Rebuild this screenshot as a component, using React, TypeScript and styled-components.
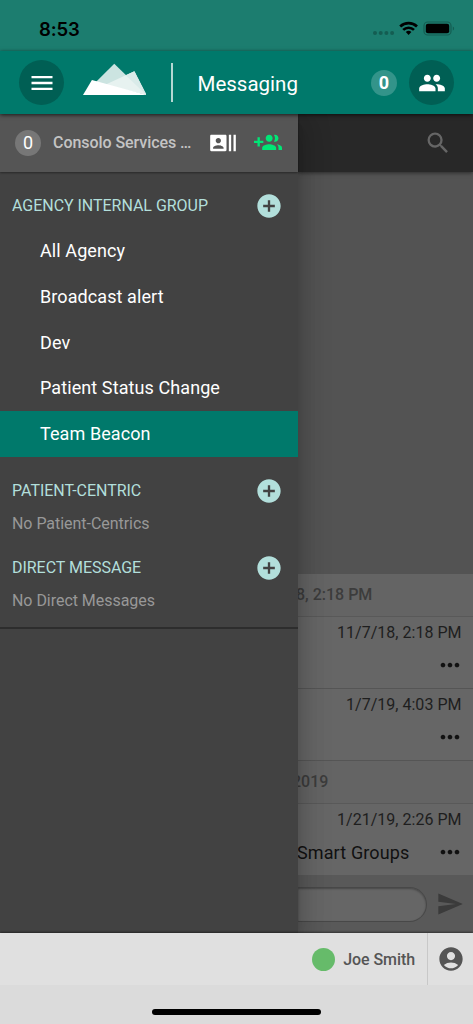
import React from 'react';
import styled, { createGlobalStyle, css } from 'styled-components';
import {
  MdMenu, MdPeople, MdRecentActors, MdSearch, MdAddCircle, MdMoreHoriz, MdSend, MdAccountCircle,
} from 'react-icons/md';

const GlobalStyle = createGlobalStyle`
  * { box-sizing: border-box; }
  body { margin: 0; font-family: Roboto, "Liberation Sans", sans-serif; }
  svg { display: block; flex: none; }
`;

const Screen = styled.div`
  width: 473px;
  height: 1024px;
  display: flex;
  flex-direction: column;
  overflow: hidden;
  background: #535353;
`;

const StatusBar = styled.div`
  height: 51px;
  flex: none;
  display: flex;
  align-items: center;
  justify-content: space-between;
  padding: 6px 18px 0 39px;
  background: #1c7d6f;
  position: relative;
  z-index: 3;
`;

const Clock = styled.span`
  font: 600 18.5px/22px Inter, Roboto, sans-serif;
  letter-spacing: -0.1px;
  color: #000;
`;

const Header = styled.header`
  height: 63px;
  flex: none;
  display: flex;
  align-items: center;
  padding: 0 19px;
  background: #00796b;
  position: relative;
  z-index: 3;
  box-shadow: 0 1px 4px rgba(0, 0, 0, 0.7);
`;

const RoundButton = styled.button`
  width: 45px;
  height: 45px;
  flex: none;
  display: flex;
  align-items: center;
  justify-content: center;
  padding: 0;
  border: 0;
  border-radius: 50%;
  background: #005f54;
  color: #fff;
`;

const Logo = styled.svg`
  margin: 0 25px 6px 18.5px;
`;

const Divider = styled.i`
  width: 1.5px;
  height: 39px;
  margin-right: 25px;
  background: #b5d8d3;
`;

const Title = styled.h1`
  flex: 1;
  margin: 2px 0 0;
  font-size: 20.5px;
  line-height: 24px;
  font-weight: 400;
  letter-spacing: 0;
  color: #fff;
`;

const Count = styled.span<{ $tone: string; $bold?: boolean }>`
  width: 26px;
  height: 26px;
  flex: none;
  border-radius: 50%;
  background: ${(p) => p.$tone};
  color: #fff;
  text-align: center;
  font-size: 18px;
  line-height: 26px;
  font-weight: ${(p) => (p.$bold ? 700 : 400)};
`;

const PeopleButton = styled(RoundButton)`
  margin-left: 12px;
`;

const Main = styled.main`
  flex: 1;
  min-height: 0;
  display: flex;
`;

const Drawer = styled.aside`
  width: 298px;
  flex: none;
  background: #424242;
  position: relative;
  z-index: 2;
  box-shadow: 0 8px 10px -5px rgba(0, 0, 0, 0.2), 0 16px 24px 2px rgba(0, 0, 0, 0.14),
    0 6px 30px 5px rgba(0, 0, 0, 0.12);
`;

const DrawerTop = styled.div`
  height: 57.5px;
  display: flex;
  align-items: center;
  padding: 0 15px;
  background: #555;
  box-shadow: 0 1px 2px rgba(0, 0, 0, 0.4);
`;

const Organization = styled.span`
  width: 156px;
  margin-left: 12px;
  font-size: 16px;
  line-height: 20px;
  font-weight: 500;
  letter-spacing: -0.06px;
  color: #c4c4c4;
  white-space: nowrap;
`;

const DrawerIcons = styled.div`
  display: flex;
  gap: 17px;
  color: #fff;
`;

const Groups = styled.nav`
  border-bottom: 2px solid #2d2d2d;
  height: 457.5px;
  padding-top: 20px;
`;

const SectionHead = styled.div<{ $first?: boolean }>`
  display: flex;
  align-items: center;
  justify-content: space-between;
  height: 28px;
  margin-top: ${(p) => (p.$first ? '0' : '20px')};
  margin-bottom: ${(p) => (p.$first ? '9px' : '0')};
  padding: 0 15px 0 12px;
  font-size: 16px;
  line-height: 20px;
  letter-spacing: -0.03px;
  color: #b2dfdb;
`;

const Item = styled.a<{ $active?: boolean }>`
  display: flex;
  align-items: center;
  height: 45.7px;
  padding: 0 0 1px 40px;
  font-size: 18px;
  letter-spacing: 0.09px;
  color: #fff;
  ${(p) => p.$active && css`background: #00796b;`}
`;

const Channels = styled.div`
  margin-bottom: 20.5px;
`;

const Empty = styled.p`
  margin: 9px 0 0 12px;
  font-size: 16px;
  line-height: 20px;
  letter-spacing: -0.04px;
  color: #989898;
`;

const Chat = styled.section`
  flex: 1;
  min-width: 0;
  display: flex;
  flex-direction: column;
  overflow: hidden;
  background: #535353;
`;

const ChatBar = styled.div`
  height: 57.5px;
  flex: none;
  display: flex;
  align-items: center;
  justify-content: flex-end;
  padding-right: 21px;
  background: #282828;
  color: #666;
  box-shadow: 0 1px 4px rgba(0, 0, 0, 0.5);
`;

const Messages = styled.div`
  margin-top: auto;
`;

const DateRow = styled.div<{ $height: number; $shift: number }>`
  height: ${(p) => p.$height}px;
  display: flex;
  align-items: center;
  border-bottom: 1px solid #595959;
  background: #646464;
  color: #3c3c3c;
  font-size: 16px;
  font-weight: 500;
  white-space: nowrap;
  text-indent: ${(p) => p.$shift}px;
`;

const Message = styled.article`
  height: 72px;
  padding: 6px 11.5px 0 0;
  border-bottom: 1px solid #555;
  background: #666;
  color: #1e1e1e;
  &:last-child { border-bottom: 0; height: 71.5px; }
`;

const Stamp = styled.time`
  display: block;
  text-align: right;
  font-size: 16px;
  line-height: 20px;
  letter-spacing: 0.02px;
`;

const MessageBody = styled.div`
  display: flex;
  align-items: center;
  justify-content: space-between;
  height: 28px;
  margin-top: 8.5px;
  margin-right: -2px;
  margin-left: -1px;
  font-size: 18px;
  letter-spacing: 0.12px;
  color: #111;
`;

const Composer = styled.div`
  height: 58px;
  flex: none;
  display: flex;
  align-items: center;
  gap: 9px;
  padding-right: 9.5px;
  background: #595959;
  color: #3b3b3b;
`;

const Input = styled.div`
  flex: 1;
  height: 35px;
  border: 1px solid #484848;
  border-left: 0;
  border-radius: 0 18px 18px 0;
  background: #666;
  box-shadow: inset 0 1px 2px rgba(0, 0, 0, 0.3);
`;

const Footer = styled.footer`
  height: 52px;
  flex: none;
  display: flex;
  align-items: center;
  justify-content: flex-end;
  background: #e0e0e0;
  color: #555;
  position: relative;
  z-index: 3;
  box-shadow: 0 -1px 2px rgba(0, 0, 0, 0.45);
`;

const Presence = styled.i`
  width: 23px;
  height: 23px;
  border-radius: 50%;
  background: #66bb6a;
`;

const UserName = styled.span`
  margin: 0 12px 0 8px;
  font-size: 16px;
  font-weight: 500;
  letter-spacing: -0.08px;
`;

const Account = styled.div`
  width: 46px;
  height: 52px;
  display: flex;
  align-items: center;
  justify-content: center;
  border-left: 1px solid #c8c8c8;
`;

const HomeArea = styled.div`
  height: 39px;
  flex: none;
  display: flex;
  justify-content: center;
  padding-top: 23.5px;
  background: #dbdbdb;
  position: relative;
  z-index: 3;
`;

const HomeBar = styled.i`
  width: 169px;
  height: 6px;
  border-radius: 3px;
  background: #000;
`;

const AddGroupIcon = () => (
  <svg width="28" height="28" viewBox="0 0 24 24" fill="#00e676">
    <path d="M8 10H5V7H3v3H0v2h3v3h2v-3h3v-2zm10 1c1.66 0 2.99-1.34 2.99-3S19.66 5 18 5c-.32 0-.63.05-.91.14.57.81.9 1.79.9 2.86s-.34 2.04-.9 2.86c.28.09.59.14.91.14zm-5 0c1.66 0 2.99-1.34 2.99-3S14.66 5 13 5c-1.66 0-3 1.34-3 3s1.34 3 3 3zm6.62 2.16c.83.73 1.38 1.66 1.38 2.84v2h3v-2c0-1.54-2.37-2.49-4.38-2.84zM13 13c-2 0-6 1-6 3v2h12v-2c0-2-4-3-6-3z" />
  </svg>
);

const StatusIcons = () => (
  <svg width="83" height="18" viewBox="0 0 83 18">
    <g fill="#145d52">
      <circle cx="3" cy="13" r="2" /><circle cx="8.7" cy="13" r="2" />
      <circle cx="14.4" cy="13" r="2" /><circle cx="20.1" cy="13" r="2" />
    </g>
    <g fill="none" stroke="#000" strokeWidth="2.7">
      <path d="M28.2 6.5a12.2 12.2 0 0 1 16.8 0" />
      <path d="M31.2 9.9a7.8 7.8 0 0 1 10.8 0" />
    </g>
    <path d="M33.8 12a4 4 0 0 1 5.6 0L36.6 15z" />
    <rect x="52" y="2" width="27" height="13" rx="3.8" fill="none" stroke="#145d52" strokeWidth="1.2" />
    <rect x="53.8" y="3.7" width="23.4" height="9.6" rx="2.1" />
    <path d="M80.8 6.4c1.8.7 1.8 3.5 0 4.2z" fill="#145d52" />
  </svg>
);

const Mountain = () => (
  <Logo width="63.5" height="33" viewBox="0 0 64 33">
    <path d="M12 20L31.5 0.5L64 32Z" fill="#cce4e1" />
    <path d="M23 21.5L51.8 8.3L64 32Z" fill="#e7f2f0" />
    <path d="M43 12.2L51.8 8.3L64 32Z" fill="#d9ebe9" />
    <path d="M0 32L9 17L64 32Z" fill="#fff" />
  </Logo>
);

const channels = ['All Agency', 'Broadcast alert', 'Dev', 'Patient Status Change', 'Team Beacon'];

const Section = ({ title, first }: { title: string; first?: boolean }) => (
  <SectionHead $first={first}>{title}<MdAddCircle size={28} /></SectionHead>
);

const Entry = ({ time, text }: { time: string; text?: string }) => (
  <Message>
    <Stamp>{time}</Stamp>
    <MessageBody><span>{text}</span><MdMoreHoriz size={28} /></MessageBody>
  </Message>
);

export default function App() {
  return (
    <>
      <GlobalStyle />
      <Screen>
        <StatusBar><Clock>8:53</Clock><StatusIcons /></StatusBar>
        <Header>
          <RoundButton><MdMenu size={28} /></RoundButton>
          <Mountain />
          <Divider />
          <Title>Messaging</Title>
          <Count $tone="#33948a" $bold>0</Count>
          <PeopleButton><MdPeople size={28} /></PeopleButton>
        </Header>
        <Main>
          <Drawer>
            <DrawerTop>
              <Count $tone="#777">0</Count>
              <Organization>Consolo Services …</Organization>
              <DrawerIcons><MdRecentActors size={28} /><AddGroupIcon /></DrawerIcons>
            </DrawerTop>
            <Groups>
              <Section title="AGENCY INTERNAL GROUP" first />
              <Channels>
                {channels.map((name) => (
                  <Item key={name} $active={name === 'Team Beacon'}>{name}</Item>
                ))}
              </Channels>
              <Section title="PATIENT-CENTRIC" />
              <Empty>No Patient-Centrics</Empty>
              <Section title="DIRECT MESSAGE" />
              <Empty>No Direct Messages</Empty>
            </Groups>
          </Drawer>
          <Chat>
            <ChatBar><MdSearch size={28} /></ChatBar>
            <Messages>
              <DateRow $height={43} $shift={-2}>8, 2:18 PM</DateRow>
              <Entry time="11/7/18, 2:18 PM" />
              <Entry time="1/7/19, 4:03 PM" />
              <DateRow $height={43} $shift={-6}>2019</DateRow>
              <Entry time="1/21/19, 2:26 PM" text="Smart Groups" />
            </Messages>
            <Composer><Input /><MdSend size={28} /></Composer>
          </Chat>
        </Main>
        <Footer>
          <Presence />
          <UserName>Joe Smith</UserName>
          <Account><MdAccountCircle size={28} /></Account>
        </Footer>
        <HomeArea><HomeBar /></HomeArea>
      </Screen>
    </>
  );
}
